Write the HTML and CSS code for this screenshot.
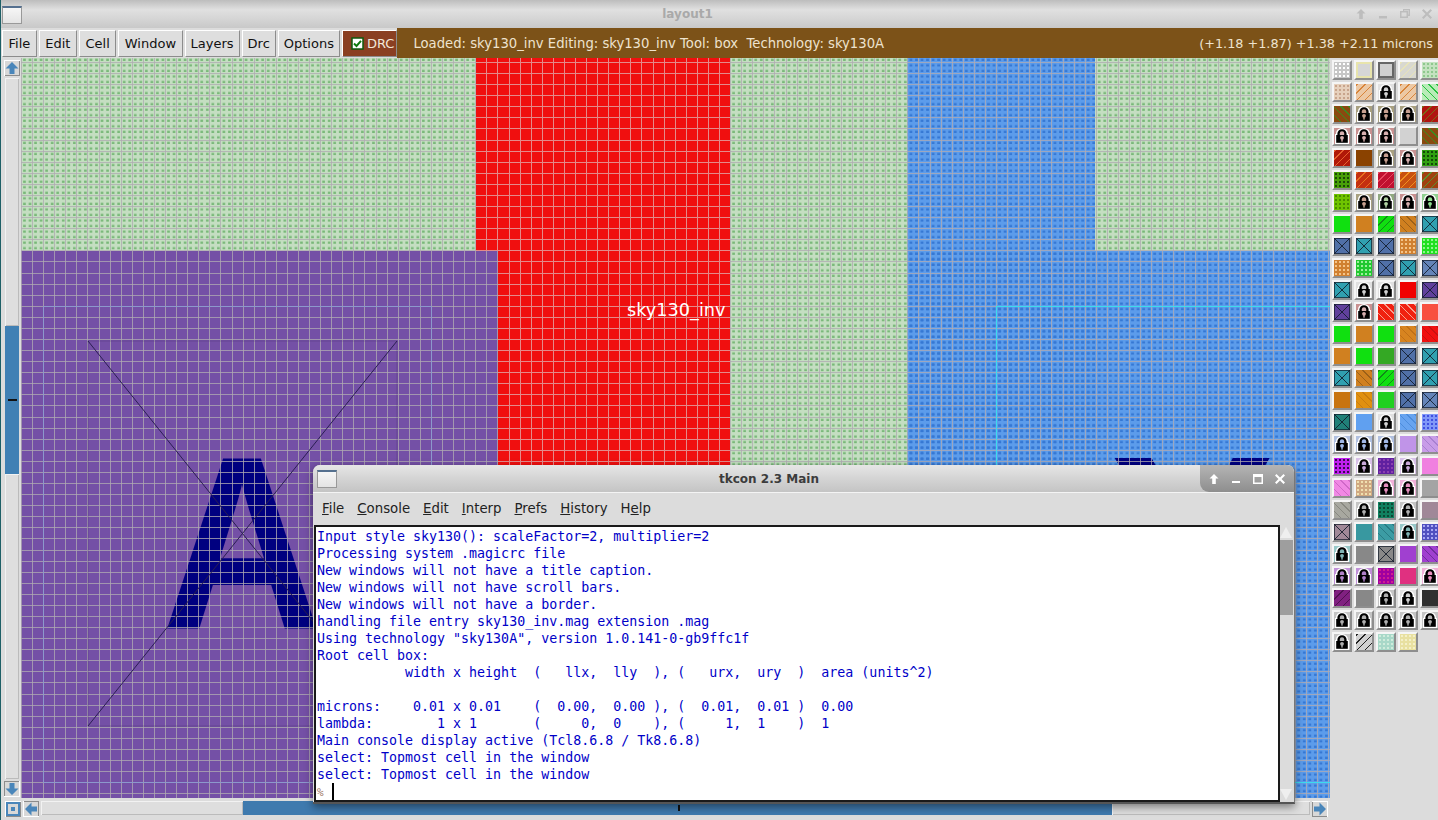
FILE: index.html
```html
<!DOCTYPE html>
<html lang="en">
<head>
    <meta charset="UTF-8">
    <title>layout1</title>
    <link rel="stylesheet" href="styles.css">
</head>
<body>
    <svg class="defs" width="0" height="0">
        <defs>
            <symbol id="lock" viewBox="0 0 16 16">
                <rect class="lock-edge" x="1" y="6" width="14" height="10"/>
                <path class="lock-edge" d="M2 7V5.500a6 5.500 0 0 1 12 0V7z"/>
                <path d="M3.400 7V5.500a4.600 4.300 0 0 1 9.200 0V7z"/>
                <path class="lock-key" d="M5.800 7V5.500a2.200 2.200 0 0 1 4.400 0V7z"/>
                <rect x="2.200" y="7" width="11.600" height="7.800"/>
                <circle class="lock-key" cx="8" cy="9.800" r="1.900"/>
                <rect class="lock-key" x="7.300" y="10" width="1.400" height="3.600"/>
            </symbol>
            <symbol id="arrow" viewBox="0 0 16 16">
                <path d="M8 2l6.500 6.500h-4V14h-5V8.500h-4z"/>
            </symbol>
        </defs>
    </svg>

    <div class="titlebar">
        <div class="win-icon"></div>
        <div class="win-title">layout1</div>
        <div class="win-buttons">
            <svg viewBox="0 0 12 12"><path d="M6 1l4.500 4.500H7.800V11H4.200V5.500H1.500z"/></svg>
            <svg viewBox="0 0 12 12"><rect x="2" y="8" width="8" height="2.500"/></svg>
            <svg viewBox="0 0 12 12"><path d="M4 1h7v7H9v2H1V3h3zM5 2.500V3h4.500v3.500h.5v-4zM2.500 4.500V8.500h5v-4z"/></svg>
            <svg viewBox="0 0 12 12"><path d="M2.500 1L6 4.500 9.500 1 11 2.500 7.500 6 11 9.500 9.500 11 6 7.500 2.500 11 1 9.500 4.500 6 1 2.500z"/></svg>
        </div>
    </div>

    <div class="toolbar">
        <div class="menu">
            <span class="menu-btn">File</span>
            <span class="menu-btn">Edit</span>
            <span class="menu-btn">Cell</span>
            <span class="menu-btn">Window</span>
            <span class="menu-btn tight">Layers</span>
            <span class="menu-btn tight">Drc</span>
            <span class="menu-btn tight">Options</span>
            <span class="menu-btn drc-btn">
                <svg class="check" viewBox="0 0 13 13">
                    <rect class="check-box" x="1" y="1" width="11" height="11"/>
                    <path class="check-mark" d="M3 6.500l2.500 2.500L10 3.800"/>
                </svg>
                DRC
            </span>
        </div>
        <div class="status">
            <span class="status-left">Loaded: sky130_inv Editing: sky130_inv Tool: box  Technology: sky130A</span>
            <span class="status-right">(+1.18 +1.87) +1.38 +2.11 microns</span>
        </div>
    </div>

    <div class="workspace">
        <div class="vscroll">
            <svg class="arrow-btn"><use href="#arrow"/></svg>
            <div class="trough-v">
                <div class="slide-light slide-top"></div>
                <div class="slide-blue"><div class="tick-h"></div></div>
                <div class="slide-light slide-fill"></div>
            </div>
            <svg class="arrow-btn arrow-down"><use href="#arrow"/></svg>
        </div>

        <svg class="canvas" viewBox="21 58 1309 740" width="1309" height="740">
            <defs>
                <pattern id="green-dots" width="5.54" height="5.54" patternUnits="userSpaceOnUse">
                    <rect class="dot-green" x="1" y="3.300" width="2.600" height="2.400"/>
                </pattern>
                <pattern id="blue-dots" width="5.54" height="5.54" patternUnits="userSpaceOnUse">
                    <rect class="dot-blue" x="1" y="3.300" width="2.800" height="2.600"/>
                </pattern>
                <!-- a wide dashed stroke gives one set of evenly spaced grid lines -->
                <g id="grid-lines">
                    <line class="grid-dash" x1="21" y1="428" x2="1330" y2="428" stroke-width="740"/>
                    <line class="grid-dash" x1="675" y1="62" x2="675" y2="798" stroke-width="1309"/>
                </g>
                <clipPath id="red-clip">
                    <path d="M476 58H730V558H498V251H476z"/>
                </clipPath>
            </defs>

            <rect class="layer-green" x="21" y="58" width="1309" height="740"/>
            <rect class="layer-green-dots" x="21" y="58" width="1309" height="740"/>
            <rect class="layer-red" x="476" y="58" width="254" height="500"/>
            <rect class="layer-blue" x="907" y="58" width="188" height="740"/>
            <rect class="layer-blue" x="907" y="251" width="423" height="547"/>
            <rect class="layer-blue-dots" x="907" y="58" width="188" height="740"/>
            <rect class="layer-blue-dots" x="907" y="251" width="423" height="547"/>
            <rect class="layer-purple" x="21" y="251" width="477" height="547"/>

            <text class="label-big" transform="translate(242 628) scale(.9 1)">A</text>
            <text class="label-big" transform="translate(1192 628) scale(.99 1)">Y</text>

            <use class="grid-all" href="#grid-lines"/>
            <use class="grid-red" href="#grid-lines" clip-path="url(#red-clip)"/>

            <rect class="box-purple" x="43.500" y="306.500" width="388" height="476"/>
            <rect class="box-cyan" x="996.500" y="306.500" width="400" height="476"/>
            <rect class="cell-box" x="88" y="341" width="309" height="385"/>
            <line class="cell-cross" x1="88" y1="341" x2="397" y2="726"/>
            <line class="cell-cross" x1="397" y1="341" x2="88" y2="726"/>

            <text class="label-cell" x="627" y="316">sky130_inv</text>
        </svg>

        <div class="palette">
            <i class="tile dots snow"></i><i class="tile solid rim-yellow"></i><i class="tile solid rim-dark"></i><i class="tile hatch ash"></i><i class="tile dots mint"></i>
            <i class="tile dots sand"></i><i class="tile hatch peach"></i><i class="tile lk l-white"><svg><use href="#lock"/></svg></i><i class="tile hatch peach"></i><i class="tile back seafoam"></i>
            <i class="tile back moss"></i><i class="tile lk l-tan"><svg><use href="#lock"/></svg></i><i class="tile lk l-tan"><svg><use href="#lock"/></svg></i><i class="tile lk l-tan"><svg><use href="#lock"/></svg></i><i class="tile hatch rust-green"></i>
            <i class="tile lk l-rose"><svg><use href="#lock"/></svg></i><i class="tile lk l-rose"><svg><use href="#lock"/></svg></i><i class="tile lk l-rose"><svg><use href="#lock"/></svg></i><i class="tile solid pale"></i><i class="tile back moss"></i>
            <i class="tile hatch ember"></i><i class="tile solid brown"></i><i class="tile lk l-tan"><svg><use href="#lock"/></svg></i><i class="tile lk l-rose"><svg><use href="#lock"/></svg></i><i class="tile dots leaf"></i>
            <i class="tile dots leaf2"></i><i class="tile hatch flame"></i><i class="tile hatch crimson"></i><i class="tile hatch tangerine"></i><i class="tile hatch bark"></i>
            <i class="tile dots lime"></i><i class="tile lk l-tan"><svg><use href="#lock"/></svg></i><i class="tile lk l-sage"><svg><use href="#lock"/></svg></i><i class="tile lk l-rose"><svg><use href="#lock"/></svg></i><i class="tile lk l-green"><svg><use href="#lock"/></svg></i>
            <i class="tile solid green"></i><i class="tile solid orange"></i><i class="tile hatch green-dark"></i><i class="tile back orange-dark"></i><i class="tile cross teal"></i>
            <i class="tile cross slate"></i><i class="tile cross teal"></i><i class="tile cross slate"></i><i class="tile dots orange-pale"></i><i class="tile dots green-pale"></i>
            <i class="tile dots orange-pale"></i><i class="tile dots green-deep"></i><i class="tile cross slate"></i><i class="tile cross teal"></i><i class="tile cross steel"></i>
            <i class="tile cross teal"></i><i class="tile lk l-white"><svg><use href="#lock"/></svg></i><i class="tile lk l-white"><svg><use href="#lock"/></svg></i><i class="tile solid red"></i><i class="tile cross violet"></i>
            <i class="tile cross violet"></i><i class="tile lk l-rose"><svg><use href="#lock"/></svg></i><i class="tile back red-white"></i><i class="tile back red-white"></i><i class="tile solid tomato"></i>
            <i class="tile solid green"></i><i class="tile solid orange"></i><i class="tile solid green"></i><i class="tile back orange-soft"></i><i class="tile back red-soft"></i>
            <i class="tile solid orange"></i><i class="tile solid green"></i><i class="tile solid green-mid"></i><i class="tile cross slate"></i><i class="tile cross teal"></i>
            <i class="tile cross teal"></i><i class="tile back orange-dark"></i><i class="tile hatch green-dark"></i><i class="tile cross slate"></i><i class="tile cross teal"></i>
            <i class="tile solid ochre"></i><i class="tile back amber"></i><i class="tile solid green-soft"></i><i class="tile cross slate"></i><i class="tile cross steel"></i>
            <i class="tile cross teal-dark"></i><i class="tile solid sky"></i><i class="tile lk l-white"><svg><use href="#lock"/></svg></i><i class="tile back sky-line"></i><i class="tile dots royal"></i>
            <i class="tile lk l-blue"><svg><use href="#lock"/></svg></i><i class="tile lk l-blue"><svg><use href="#lock"/></svg></i><i class="tile lk l-blue"><svg><use href="#lock"/></svg></i><i class="tile solid lavender"></i><i class="tile back lavender-line"></i>
            <i class="tile dots magenta"></i><i class="tile lk l-lav"><svg><use href="#lock"/></svg></i><i class="tile dots plum"></i><i class="tile lk l-lav"><svg><use href="#lock"/></svg></i><i class="tile solid pink"></i>
            <i class="tile back pink-line"></i><i class="tile dots tan"></i><i class="tile lk l-hot"><svg><use href="#lock"/></svg></i><i class="tile lk l-hot"><svg><use href="#lock"/></svg></i><i class="tile solid grey"></i>
            <i class="tile back grey-line"></i><i class="tile lk l-grey"><svg><use href="#lock"/></svg></i><i class="tile dots jungle"></i><i class="tile lk l-grey"><svg><use href="#lock"/></svg></i><i class="tile solid mauve"></i>
            <i class="tile cross mauve"></i><i class="tile solid sea"></i><i class="tile back sea-line"></i><i class="tile lk l-teal"><svg><use href="#lock"/></svg></i><i class="tile dots indigo"></i>
            <i class="tile lk l-teal"><svg><use href="#lock"/></svg></i><i class="tile solid iron"></i><i class="tile cross iron"></i><i class="tile solid purple"></i><i class="tile back purple-line"></i>
            <i class="tile lk l-purple"><svg><use href="#lock"/></svg></i><i class="tile lk l-purple"><svg><use href="#lock"/></svg></i><i class="tile dots fuchsia"></i><i class="tile solid rose"></i><i class="tile lk l-hot"><svg><use href="#lock"/></svg></i>
            <i class="tile hatch grape"></i><i class="tile solid iron"></i><i class="tile lk l-grey"><svg><use href="#lock"/></svg></i><i class="tile lk l-white"><svg><use href="#lock"/></svg></i><i class="tile solid coal"></i>
            <i class="tile lk l-grey"><svg><use href="#lock"/></svg></i><i class="tile lk l-grey"><svg><use href="#lock"/></svg></i><i class="tile lk l-grey"><svg><use href="#lock"/></svg></i><i class="tile lk l-grey"><svg><use href="#lock"/></svg></i><i class="tile lk l-grey"><svg><use href="#lock"/></svg></i>
            <i class="tile lk l-grey"><svg><use href="#lock"/></svg></i><i class="tile hatch pale-line"></i><i class="tile dots aqua"></i><i class="tile dots butter"></i>
        </div>

        <svg class="corner-btn" viewBox="0 0 16 16">
            <rect class="corner-ring" x="2" y="2" width="12" height="12"/>
            <rect class="corner-dot" x="6" y="6" width="4" height="4"/>
        </svg>

        <div class="hscroll">
            <svg class="arrow-btn arrow-left"><use href="#arrow"/></svg>
            <div class="trough-h">
                <div class="slide-light slide-start"></div>
                <div class="slide-blue slide-wide"><div class="tick-v"></div></div>
                <div class="slide-light slide-fill"></div>
            </div>
            <svg class="arrow-btn arrow-right"><use href="#arrow"/></svg>
        </div>
    </div>

    <!-- console window floats over the layout -->
    <div class="tkcon">
        <div class="tk-title">
            <div class="win-icon tk-icon"></div>
            <div class="tk-title-text">tkcon 2.3 Main</div>
            <div class="tk-buttons">
                <svg viewBox="0 0 12 12"><path d="M6 1l4.500 4.500H7.800V11H4.200V5.500H1.500z"/></svg>
                <svg viewBox="0 0 12 12"><rect x="2" y="8" width="8" height="2"/></svg>
                <svg viewBox="0 0 12 12"><path d="M1 1h10v10H1zM2.500 4v5.500h7V4z"/></svg>
                <svg viewBox="0 0 12 12"><path d="M2.500 1L6 4.500 9.500 1 11 2.500 7.500 6 11 9.500 9.500 11 6 7.500 2.500 11 1 9.500 4.500 6 1 2.500z"/></svg>
            </div>
        </div>
        <div class="tk-menu">
            <span><u>F</u>ile</span>
            <span><u>C</u>onsole</span>
            <span><u>E</u>dit</span>
            <span><u>I</u>nterp</span>
            <span><u>P</u>refs</span>
            <span><u>H</u>istory</span>
            <span>H<u>e</u>lp</span>
        </div>
        <div class="tk-body">
            <pre class="tk-text">Input style sky130(): scaleFactor=2, multiplier=2
Processing system .magicrc file
New windows will not have a title caption.
New windows will not have scroll bars.
New windows will not have a border.
handling file entry sky130_inv.mag extension .mag
Using technology "sky130A", version 1.0.141-0-gb9ffc1f
Root cell box:
           width x height  (   llx,  lly  ), (   urx,  ury  )  area (units^2)

microns:    0.01 x 0.01    (  0.00,  0.00 ), (  0.01,  0.01 )  0.00
lambda:        1 x 1       (     0,  0    ), (     1,  1    )  1
Main console display active (Tcl8.6.8 / Tk8.6.8)
select: Topmost cell in the window
select: Topmost cell in the window
<span class="tk-prompt">%</span> <span class="tk-cursor"></span></pre>
            <div class="tk-scroll">
                <div class="tk-tri"></div>
                <div class="tk-thumb"></div>
                <div class="tk-rest"></div>
                <div class="tk-tri tk-tri-down"></div>
            </div>
        </div>
    </div>
</body>
</html>
```

FILE: styles.css
```css
html, body {
    margin: 0;
    height: 820px;
    overflow: hidden;
}

body {
    position: relative;
    background-color: #dcdcdc;
    font-family: "DejaVu Sans", sans-serif;
    font-size: 13px;
    border-left: 1px solid #1d5f66;
    box-sizing: border-box;
}

.defs {
    position: absolute;
}

/* Window title bars */
.titlebar {
    display: flex;
    align-items: center;
    height: 28px;
    padding: 0 0 0 1px;
    box-sizing: border-box;
    background: linear-gradient(#bdbdbd, #e0e0e0 35%, #d4d4d4 70%, #c8c8c8);
}

.win-icon {
    width: 18px;
    height: 15px;
    margin-top: 2px;
    border: 1px solid #999;
    border-top: 2px solid #55708f;
    background: linear-gradient(#f6f6f6, #e4e4e4);
}

.win-title {
    flex: 1;
    text-align: center;
    font-size: 12px;
    font-weight: bold;
    color: #a9a9a9;
    padding-right: 2px;
}

.win-buttons {
    display: flex;
    gap: 10px;
    padding-right: 5px;
    fill: #bdbdbd;
}

.win-buttons svg {
    width: 12px;
    height: 12px;
}

/* Toolbar */
.toolbar {
    display: flex;
    height: 30px;
    box-sizing: border-box;
    padding-top: 1px;
    background-color: #dcdcdc;
}

.menu {
    display: flex;
    gap: 2px;
    padding: 1px 0 1px 1px;
    box-sizing: border-box;
}

.menu-btn {
    display: flex;
    align-items: center;
    gap: 3px;
    padding: 0 5.500px;
    color: #111;
    background-color: #dedede;
    border: 1px solid;
    border-color: #fff #8c8c8c #8c8c8c #fff;
}

.tight {
    padding: 0 5px;
}

.drc-btn {
    background-color: #8a3f22;
    color: #f2e6d8;
    padding: 0 2px 0 8px;
}

.check {
    width: 13px;
    height: 13px;
}

.check-box {
    fill: #fff;
    stroke: #0d5a0d;
    stroke-width: 1.500;
}

.check-mark {
    fill: none;
    stroke: #0d7a0d;
    stroke-width: 2;
}

.status {
    flex: 1;
    display: flex;
    align-items: center;
    justify-content: space-between;
    padding: 0 5px 0 16px;
    margin-top: -1px;
    color: #eee3cf;
    background-color: #7c5218;
}

.status-left {
    white-space: pre;
    font-size: 13.200px;
}

.status-right {
    font-size: 12.800px;
}

/* Main area */
.workspace {
    display: grid;
    grid-template-columns: 20px 1309px 108px;
    grid-template-rows: 740px 22px;
}

.vscroll {
    display: flex;
    flex-direction: column;
    align-items: center;
    padding: 2px 0 1px 2px;
    box-sizing: border-box;
}

.arrow-btn {
    flex: none;
    width: 16px;
    height: 16px;
    fill: #4a86ba;
    background-color: #d8d8d8;
    box-shadow: inset 1px 1px 0 #fff, inset -1px -1px 0 #8c8c8c;
}

.arrow-down {
    transform: rotate(180deg);
}

.arrow-left {
    transform: rotate(-90deg);
}

.arrow-right {
    transform: rotate(90deg);
}

.trough-v {
    flex: 1;
    display: flex;
    flex-direction: column;
    width: 14px;
    margin: 2px 0;
}

.trough-h {
    flex: 1;
    display: flex;
    height: 14px;
    margin: 0 2px;
}

.slide-light {
    background-color: #dedede;
    box-shadow: inset 1px 1px 0 #f2f2f2, inset -1px -1px 0 #bbb;
}

.slide-top {
    height: 248px;
}

.slide-start {
    width: 202px;
}

.slide-fill {
    flex: 1;
}

.slide-blue {
    display: flex;
    align-items: center;
    justify-content: center;
    background-color: #4080b4;
    height: 148px;
}

.slide-wide {
    height: auto;
    width: 869px;
    background-color: #3f7aae;
}

.tick-h {
    width: 9px;
    height: 2px;
    background-color: #111;
}

.tick-v {
    width: 2px;
    height: 6px;
    margin-left: 2px;
    background-color: #111;
}

.canvas {
    display: block;
}

.corner-btn {
    width: 16px;
    height: 16px;
    margin: 3px 0 0 4px;
    background-color: #d8d8d8;
    box-shadow: inset 1px 1px 0 #fff, inset -1px -1px 0 #8c8c8c;
}

.corner-ring {
    fill: #d8d8d8;
    stroke: #4a86ba;
    stroke-width: 2;
}

.corner-dot {
    fill: #4a86ba;
}

.hscroll {
    display: flex;
    align-items: flex-start;
    padding: 3px 2px 0 2px;
}

/* Layout layers */
.layer-green {
    fill: #c4dec1;
}

.layer-green-dots {
    fill: url(#green-dots);
}

.layer-blue {
    fill: #5c9ceb;
}

.layer-blue-dots {
    fill: url(#blue-dots);
}

.layer-red {
    fill: #f00f0f;
}

.layer-purple {
    fill: #7450a6;
}

.dot-green {
    fill: #78b878;
}

.dot-blue {
    fill: #3678d4;
}

.grid-dash {
    stroke-dasharray: 1 10.08;
    shape-rendering: crispEdges;
}

.grid-all {
    stroke: rgba(176, 170, 178, .78);
}

.grid-red {
    stroke: #e48a8a;
}

.box-purple {
    fill: none;
    stroke: #8c98cc;
}

.box-cyan {
    fill: none;
    stroke: #3cdcec;
}

.cell-box {
    fill: none;
    stroke: #45306c;
    stroke-opacity: .35;
}

.cell-cross {
    stroke: #2a1f52;
    stroke-width: 1;
}

.label-big {
    font-family: "Liberation Sans", sans-serif;
    font-weight: bold;
    font-size: 247px;
    text-anchor: middle;
    fill: #000080;
}

.label-cell {
    font-family: "DejaVu Sans", sans-serif;
    font-size: 17.700px;
    fill: #fff;
}

/* Layer palette */
.palette {
    grid-row: 1 / 3;
    grid-column: 3;
    display: grid;
    grid-template-columns: repeat(5, 20px);
    grid-auto-rows: 20px;
    gap: 2px;
    padding: 2px 0 0 2px;
    align-content: start;
}

.tile {
    display: block;
    box-sizing: border-box;
    border: 2px solid;
    border-color: #f5f5f5 #8e8e8e #8e8e8e #f5f5f5;
    background-color: var(--a);
}

.tile svg {
    display: block;
    width: 16px;
    height: 16px;
}

.lk {
    color: var(--b);
}

.lock-edge {
    fill: #fff;
}

.lock-key {
    fill: currentColor;
}

.dots {
    background-image: radial-gradient(circle, var(--b) 42%, transparent 48%);
    background-size: 4px 4px;
}

.hatch {
    background-image: repeating-linear-gradient(-45deg, var(--a) 0 4.500px, var(--b) 4.500px 5.500px);
}

.back {
    background-image: repeating-linear-gradient(45deg, var(--a) 0 4.500px, var(--b) 4.500px 5.500px);
}

.cross {
    background-image:
        linear-gradient(45deg, transparent 47%, rgba(16, 26, 40, .85) 47% 53%, transparent 53%),
        linear-gradient(-45deg, transparent 47%, rgba(16, 26, 40, .85) 47% 53%, transparent 53%);
    box-shadow: inset 0 0 0 1px rgba(16, 26, 40, .7);
}

.rim-yellow { --a: #d6d6d6; box-shadow: inset 0 0 0 2px #e8e4ac; }
.rim-dark { --a: #cfcfcf; box-shadow: inset 0 0 0 2px #666; }
.snow { --a: #c6c6c6; --b: #fff; }
.ash { --a: #d8d8d0; --b: #e8e4b8; }
.mint { --a: #c4e2c0; --b: #8ec88e; }
.sand { --a: #e6d0bc; --b: #c8a48c; }
.peach { --a: #ecc8a4; --b: #d8843a; }
.seafoam { --a: #b8ecb8; --b: #28c040; }
.moss { --a: #8a4a10; --b: #3c8c20; }
.rust-green { --a: #b01410; --b: #7c6a18; }
.pale { --a: #d2d2d2; }
.ember { --a: #b01808; --b: #e86030; }
.brown { --a: #8a4200; }
.leaf { --a: #30a010; --b: #124808; }
.leaf2 { --a: #48a008; --b: #1c4808; }
.flame { --a: #c43010; --b: #e87020; }
.crimson { --a: #c01030; --b: #e84860; }
.tangerine { --a: #c85010; --b: #f09020; }
.bark { --a: #a04010; --b: #5c9030; }
.lime { --a: #70c400; --b: #488c00; }
.green { --a: #10e010; }
.green-mid { --a: #34a824; }
.green-soft { --a: #20d020; }
.green-dark { --a: #10e010; --b: #108a18; }
.orange { --a: #d08020; }
.orange-dark { --a: #d08020; --b: #9c6018; }
.orange-pale { --a: #d08030; --b: #f4c488; }
.orange-soft { --a: #d88420; --b: #c07018; }
.green-pale { --a: #20e020; --b: #90f490; }
.green-deep { --a: #20c830; --b: #9cf09c; }
.ochre { --a: #c87410; }
.amber { --a: #e09010; --b: #c87c10; }
.teal { --a: #30a0b0; }
.teal-dark { --a: #208078; }
.slate { --a: #5070a8; }
.steel { --a: #6484b8; }
.violet { --a: #60409c; }
.red { --a: #f00000; }
.tomato { --a: #f85040; }
.red-white { --a: #f02010; --b: #f8a090; }
.red-soft { --a: #f01010; --b: #c81010; }
.sky { --a: #60a0f0; }
.sky-line { --a: #68a4f0; --b: #4c8cdc; }
.royal { --a: #8098f8; --b: #4050e0; }
.lavender { --a: #c094e8; }
.lavender-line { --a: #c89ce8; --b: #a880d0; }
.magenta { --a: #c020f0; --b: #380c50; }
.plum { --a: #6020a0; --b: #8c40b0; }
.pink { --a: #f080e0; }
.pink-line { --a: #f088e4; --b: #d068c8; }
.tan { --a: #d0a880; --b: #f0e0b0; }
.grey { --a: #a4a4a4; }
.grey-line { --a: #a8a8a0; --b: #888880; }
.jungle { --a: #108060; --b: #0c4834; }
.mauve { --a: #a08898; }
.sea { --a: #3898a0; }
.sea-line { --a: #3c9ca4; --b: #287c84; }
.indigo { --a: #5050c0; --b: #a8a8f4; }
.iron { --a: #888; }
.purple { --a: #a040d0; }
.purple-line { --a: #a040d0; --b: #702c9c; }
.fuchsia { --a: #a000a0; --b: #d02090; }
.rose { --a: #e03080; }
.grape { --a: #802080; --b: #501050; }
.coal { --a: #303030; }
.pale-line { --a: #d0d0d0; --b: #222; }
.aqua { --a: #a8d8c8; --b: #d0ecdc; }
.butter { --a: #e8e0a0; --b: #f4f0c8; }

.l-white { --a: #e0e0e0; --b: #d0d0d0; }
.l-tan { --a: #a8a080; --b: #c8a090; }
.l-rose { --a: #c89090; --b: #d8b0b0; }
.l-sage { --a: #90a880; --b: #b0d0a0; }
.l-green { --a: #90d090; --b: #90e090; }
.l-blue { --a: #b0c0e0; --b: #a0b8e8; }
.l-lav { --a: #d8c0e8; --b: #c8a8d8; }
.l-hot { --a: #f0b0d8; --b: #e890c0; }
.l-grey { --a: #c4c4c4; --b: #b0b0b0; }
.l-teal { --a: #98c8c8; --b: #80b4b4; }
.l-purple { --a: #c090d8; --b: #b080c8; }

/* tkcon window */
.tkcon {
    position: absolute;
    left: 312px;
    top: 465px;
    width: 982px;
    height: 339px;
    display: flex;
    flex-direction: column;
    box-sizing: border-box;
    background-color: #dcdcdc;
    border-radius: 7px 7px 0 0;
    border-bottom: 2px solid #555;
    border-right: 1px solid #777;
    box-shadow: 0 3px 9px rgba(0, 0, 0, .45);
}

.tk-title {
    position: relative;
    display: flex;
    align-items: center;
    flex: none;
    height: 28px;
    padding-left: 4px;
    box-sizing: border-box;
    border-radius: 7px 7px 0 0;
    border-bottom: 1px solid #f4f4f4;
    background: linear-gradient(#e6e6e6, #d4d4d4 50%, #c4c4c4);
}

.tk-icon {
    margin-top: 0;
}

.tk-title-text {
    flex: 1;
    text-align: center;
    font-size: 12px;
    font-weight: bold;
    color: #3c3c3c;
    padding-right: 93px;
}

.tk-buttons {
    position: absolute;
    right: 0;
    top: 0;
    bottom: 0;
    width: 94px;
    display: flex;
    align-items: center;
    gap: 10px;
    padding-left: 8px;
    box-sizing: border-box;
    border-radius: 0 7px 0 9px;
    background: linear-gradient(#b4b4b4, #8e8e8e);
    fill: #fff;
}

.tk-buttons svg {
    width: 12px;
    height: 12px;
}

.tk-menu {
    display: flex;
    flex: none;
    align-items: center;
    gap: 13px;
    height: 32px;
    padding: 0 0 2px 9px;
    box-sizing: border-box;
    font-size: 13.300px;
    color: #222;
}

.tk-body {
    flex: 1;
    display: flex;
    min-height: 0;
    padding: 0 1px 0 1px;
}

.tk-text {
    flex: 1;
    margin: 0;
    padding: 1px 0 0 1px;
    overflow: hidden;
    background-color: #fff;
    border: 2px solid #1a1a1a;
    font-family: "DejaVu Sans Mono", monospace;
    font-size: 13.300px;
    line-height: 17px;
    color: #0000c8;
}

.tk-prompt {
    color: #a07868;
    font-size: 11px;
}

.tk-cursor {
    display: inline-block;
    width: 2px;
    height: 17px;
    vertical-align: top;
    background-color: #000;
}

.tk-scroll {
    flex: none;
    display: flex;
    flex-direction: column;
    width: 13px;
}

.tk-tri {
    flex: none;
    width: 0;
    height: 0;
    margin: 2px 0;
    border: solid transparent;
    border-width: 0 6px 11px;
    border-bottom-color: #efefef;
}

.tk-tri-down {
    border-width: 11px 6px 0;
    border-top-color: #efefef;
}

.tk-thumb {
    height: 75px;
    background-color: #9e9e9e;
}

.tk-rest {
    flex: 1;
    background-color: #dcdcdc;
}
```
